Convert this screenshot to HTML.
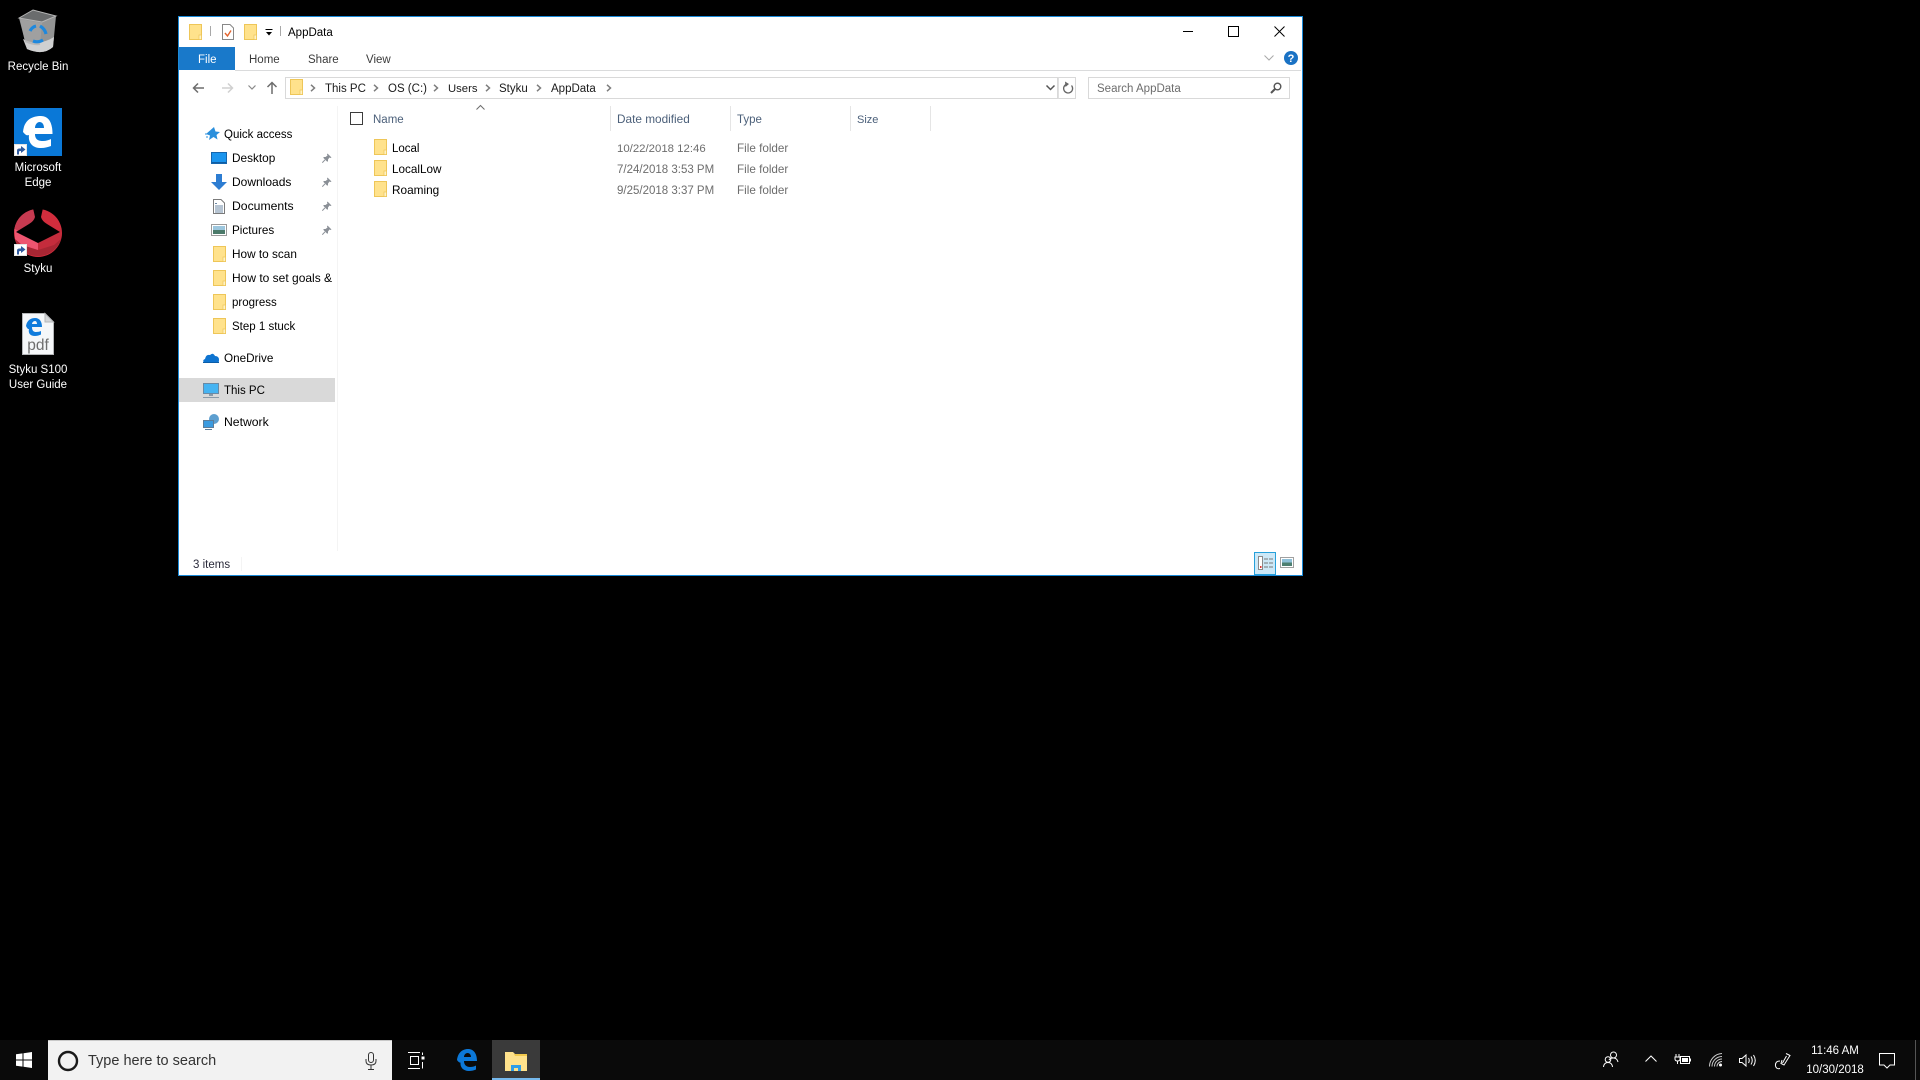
<!DOCTYPE html>
<html><head><meta charset="utf-8"><title>AppData</title>
<style>
html,body{margin:0;padding:0;width:1920px;height:1080px;background:#000;overflow:hidden}
body{position:relative;font-family:"Liberation Sans",sans-serif;font-size:11.5px}
.t{position:absolute;line-height:16px;white-space:nowrap;color:#000;margin-top:1px}
.d{color:#fff;text-align:center;width:76px;left:0}
.h{color:#4c607a}.g{color:#6d6d6d}
.n{font-size:12px}
.b{position:absolute}
svg{position:absolute;overflow:visible}
</style></head><body>
<svg width="0" height="0" style="position:absolute"><defs>
<symbol id="fo" viewBox="0 0 13 16"><rect x=".5" y=".5" width="12" height="15" fill="#ffe28c" stroke="#eec658"/><rect x="10" y="11" width="2.5" height="4.5" fill="#fff2c4" stroke="#eec658" stroke-width=".7"/></symbol>
<symbol id="pin" viewBox="0 0 10 10"><path d="M5.5 0.5L9.500 4.500L8.500 5L7.500 4.500L6 6.500L6 8.500L5 8.500L1.500 5L1.500 4L3.500 4L5.500 2.500L5 1.500Z" fill="#8a8f96"/><path d="M3 6.800L.3 9.700" stroke="#8a8f96"/></symbol>
<symbol id="ch" viewBox="0 0 6 8"><path d="M1 .8L4.500 4L1 7.200" fill="none" stroke="#7c7c7c" stroke-width="1.500"/></symbol>
<symbol id="sc" viewBox="0 0 13 12"><rect width="13" height="12" fill="#e4e4e4"/><rect x="1" y="1" width="11" height="10" fill="#fff"/><path d="M3 10.500V6.500Q3 4.500 5.500 4.500H7V2L11.500 5.500L7 9V7H6Q5 7 5 8V10.500Z" fill="#2f5a9e"/></symbol>
</defs></svg>

<!-- desktop icons -->
<svg style="left:18px;top:9px" width="40" height="44" viewBox="0 0 40 44">
<path d="M1 9L15 1L38 7L35 38Q25 47 9 40Z" fill="#949595"/>
<path d="M1 9L15 1L38 7L24 13Z" fill="#6a6c6d" stroke="#b5b5b5"/>
<path d="M5 30Q20 38 36 28L35 38Q25 47 9 40Z" fill="#cfd0d1"/>
<path d="M2 10L7 33Q15 37 22 36L24 14Z" fill="#a8a8a8" opacity=".6"/>
<g fill="none" stroke="#1e88dd" stroke-width="3.200"><path d="M12 22Q14 18 18 17"/><path d="M22 17Q27 20 28 25"/><path d="M25 31Q20 34 15 32"/></g>
</svg>
<div class="t d" style="top:58px">Recycle Bin</div>

<div class="b" style="left:14px;top:108px;width:48px;height:48px;background:#0a78d7"></div>
<svg style="left:14px;top:108px" width="48" height="48" viewBox="0 0 48 48"><path fill-rule="evenodd" fill="#fff" d="M9 24C10 12 18 8 27 8C35 8 38.500 15 38.500 26H21C21 32 25 33 29 33C32 33 35 32 37 31V38C34 39 31 40 27 40C18 40 14 34 15 27C12 28 11 26 9 24ZM21 20H30C30 16 28 14 25.500 14C23 14 21 17 21 20Z"/></svg>
<svg style="left:14px;top:144px" width="13" height="12"><use href="#sc"/></svg>
<div class="t d" style="top:159px">Microsoft</div><div class="t d" style="top:174px">Edge</div>

<svg style="left:14px;top:209px" width="48" height="48" viewBox="0 0 48 48">
<circle cx="24" cy="24" r="24" fill="#d22d3d"/>
<path d="M0 24A24 24 0 0 1 19 .5L24 10V26L8 20Z" fill="#c63a50"/>
<path d="M1 30L13 30L24 36L35 30L47 30A24 24 0 0 1 1 30Z" fill="#a82633"/>
<path d="M.5 20L8 24L24 34L24 41L8 36L1 30Z" fill="#ee5570"/>
<path d="M47.500 20L40 24L24 34L24 41L40 36L47 30Z" fill="#c42c3c"/>
<path d="M19 -1H29L27 8Q28 12 33 15L46 23L24 34L2 23L15 15Q20 12 21 8Z" fill="#000"/>
</svg>
<svg style="left:14px;top:244px" width="13" height="12"><use href="#sc"/></svg>
<div class="t d" style="top:260px">Styku</div>

<svg style="left:22px;top:313px" width="32" height="42" viewBox="0 0 32 42"><path d="M.5.500H23L31.500 9V41.500H.5Z" fill="#f5f7f9" stroke="#b4b6b8"/><path d="M23 .5V9H31.500Z" fill="#d4d6d8" stroke="#b4b6b8"/>
<path fill-rule="evenodd" fill="#0f7bdc" d="M4 13C5 7 9 5 13 5C18 5 20 9 20 14H10C10 18 12 19 14 19C16 19 18 18.500 19 18V21.500C17 22.500 15 23 13 23C8 23 6 20 7 16C6 16.500 5 15 4 13ZM10 11H15C15 9 14 8 13 8C11.500 8 10 9.500 10 11Z"/>
<text x="16" y="37" text-anchor="middle" font-family="Liberation Sans" font-size="15.500" fill="#6e6e6e">pdf</text></svg>
<div class="t d" style="top:361px">Styku S100</div><div class="t d" style="top:376px">User Guide</div>

<!-- window -->
<div class="b" style="left:178px;top:16px;width:1123px;height:558px;background:#fff;border:1px solid #1a8ad8"></div>

<!-- title bar -->
<svg style="left:189px;top:24px" width="13" height="16"><use href="#fo"/></svg>
<div class="b" style="left:210px;top:26px;width:1px;height:10px;background:#a8a8a8"></div>
<svg style="left:222px;top:24px" width="12" height="16" viewBox="0 0 12 16"><path d="M.5.500H8L11.500 4V15.500H.5Z" fill="#fff" stroke="#888"/><path d="M3 9L5.500 12L9 6.500" fill="none" stroke="#e2632d" stroke-width="1.400"/></svg>
<svg style="left:244px;top:24px" width="13" height="16"><use href="#fo"/></svg>
<svg style="left:265px;top:29px" width="8" height="8" viewBox="0 0 8 8"><path d="M.5.500H7.500" stroke="#000"/><path d="M1 3H7L4 6.500Z" fill="#000"/></svg>
<div class="b" style="left:280px;top:26px;width:1px;height:10px;background:#a8a8a8"></div>
<div class="t" style="left:288px;top:24px">AppData</div>
<div class="b" style="left:1183px;top:31px;width:10px;height:1px;background:#000"></div>
<div class="b" style="left:1228px;top:26px;width:9px;height:9px;border:1px solid #000"></div>
<svg style="left:1274px;top:26px" width="11" height="11"><path d="M.5.500L10.500 10.500M10.500.500L.5 10.500" stroke="#000" stroke-width="1"/></svg>

<!-- ribbon -->
<div class="b" style="left:179px;top:47px;width:56px;height:23px;background:#1979ca"></div>
<div class="t" style="left:198px;top:51px;color:#fff">File</div>
<div class="t" style="left:249px;top:51px;color:#3b3b3b">Home</div>
<div class="t" style="left:308px;top:51px;color:#3b3b3b">Share</div>
<div class="t" style="left:366px;top:51px;color:#3b3b3b">View</div>
<div class="b" style="left:235px;top:70px;width:1066px;height:1px;background:#dadbdc"></div>
<svg style="left:1264px;top:55px" width="10" height="6"><path d="M.5.500L5 5L9.500.5" fill="none" stroke="#a9a9a9"/></svg>
<svg style="left:1284px;top:51px" width="14" height="14"><circle cx="7" cy="7" r="7" fill="#1a72c4"/><text x="7" y="11" text-anchor="middle" font-family="Liberation Sans" font-weight="bold" font-size="11" fill="#fff">?</text></svg>

<!-- nav buttons -->
<svg style="left:192px;top:82px" width="12" height="12" viewBox="0 0 12 12"><path d="M12 6H1.500M6 1.500L1.500 6L6 10.500" fill="none" stroke="#6d6d6d" stroke-width="1.500"/></svg>
<svg style="left:222px;top:82px" width="12" height="12" viewBox="0 0 12 12"><path d="M0 6H10.500M6 1.500L10.500 6L6 10.500" fill="none" stroke="#d0d0d0" stroke-width="1.500"/></svg>
<svg style="left:248px;top:85px" width="8" height="5"><path d="M.5.500L4 4L7.500.5" fill="none" stroke="#8a8a8a" stroke-width="1.200"/></svg>
<svg style="left:266px;top:81px" width="12" height="13" viewBox="0 0 12 13"><path d="M6 13V1.500M1.500 6L6 1.500L10.500 6" fill="none" stroke="#6d6d6d" stroke-width="1.500"/></svg>

<!-- address bar -->
<div class="b" style="left:285px;top:77px;width:771px;height:20px;border:1px solid #d9d9d9"></div>
<div class="b" style="left:1058px;top:77px;height:20px;border:1px solid #d9d9d9;border-left:1px solid #e0e0e0;box-sizing:content-box;width:16px"></div>
<svg style="left:290px;top:79px" width="13" height="16"><use href="#fo"/></svg>
<svg style="left:310px;top:84px" width="6" height="8"><use href="#ch"/></svg>
<div class="t" style="left:325px;top:80px;color:#1a1a1a">This PC</div>
<svg style="left:373px;top:84px" width="6" height="8"><use href="#ch"/></svg>
<div class="t" style="left:388px;top:80px;color:#1a1a1a">OS (C:)</div>
<svg style="left:433px;top:84px" width="6" height="8"><use href="#ch"/></svg>
<div class="t" style="left:448px;top:80px;color:#1a1a1a;font-size:11.300px">Users</div>
<svg style="left:485px;top:84px" width="6" height="8"><use href="#ch"/></svg>
<div class="t" style="left:499px;top:80px;color:#1a1a1a">Styku</div>
<svg style="left:536px;top:84px" width="6" height="8"><use href="#ch"/></svg>
<div class="t" style="left:551px;top:80px;color:#1a1a1a">AppData</div>
<svg style="left:606px;top:84px" width="6" height="8"><use href="#ch"/></svg>
<svg style="left:1046px;top:85px" width="9" height="6"><path d="M.5.500L4.500 4.500L8.500.5" fill="none" stroke="#555" stroke-width="1.500"/></svg>
<svg style="left:1062px;top:81px" width="12" height="14" viewBox="0 0 12 14"><path d="M9.500 4.500A4.500 4.500 0 1 1 4 3.500" fill="none" stroke="#666" stroke-width="1.300"/><path d="M3 .5L7 3L3.500 6Z" fill="#666"/></svg>

<!-- search -->
<div class="b" style="left:1088px;top:77px;width:200px;height:20px;border:1px solid #d9d9d9"></div>
<div class="t g" style="left:1097px;top:80px">Search AppData</div>
<svg style="left:1270px;top:82px" width="12" height="12" viewBox="0 0 12 12"><circle cx="7.500" cy="4.500" r="3.300" fill="none" stroke="#555" stroke-width="1.400"/><path d="M5 7L1 11" stroke="#555" stroke-width="2"/></svg>

<!-- nav pane -->
<div class="b" style="left:337px;top:106px;width:1px;height:445px;background:#f4f4f4"></div>
<svg style="left:205px;top:126px" width="15" height="15" viewBox="0 0 15 15"><path d="M9 1L10.500 5.500L15 6L11.500 9L12.500 13.500L8.500 11L4 14L5 9.500L1 8" fill="#2a8fdc"/><path d="M0 8H4M1 11H3" stroke="#2a8fdc"/></svg>
<div class="t" style="left:224px;top:126px">Quick access</div>

<svg style="left:211px;top:152px" width="16" height="12" viewBox="0 0 16 12"><rect x=".5" y=".5" width="15" height="11" fill="#1b95ee" stroke="#1666ad"/><path d="M1 10.500H15" stroke="#0f5da3"/></svg>
<div class="t" style="left:232px;top:149px;font-size:11.800px">Desktop</div>
<svg style="left:322px;top:153px" width="10" height="10"><use href="#pin"/></svg>

<svg style="left:211px;top:174px" width="16" height="16" viewBox="0 0 16 16"><path d="M5 0H11V8H16L8 16L0 8H5Z" fill="#2d7dd2"/></svg>
<div class="t n" style="left:232px;top:173px">Downloads</div>
<svg style="left:322px;top:177px" width="10" height="10"><use href="#pin"/></svg>

<svg style="left:213px;top:199px" width="12" height="15" viewBox="0 0 12 15"><path d="M.5.500H8L11.500 4V14.500H.5Z" fill="#fff" stroke="#7a7a7a"/><path d="M2 4.500H4M2 7H10M2 9H10M2 11H10M2 13H10" stroke="#6d89a6"/></svg>
<div class="t n" style="left:232px;top:197px;font-size:12.200px">Documents</div>
<svg style="left:322px;top:201px" width="10" height="10"><use href="#pin"/></svg>

<svg style="left:211px;top:224px" width="16" height="12" viewBox="0 0 16 12"><rect x=".5" y=".5" width="15" height="11" fill="#fff" stroke="#9a9a9a"/><rect x="2" y="2" width="12" height="4" fill="#9cc6dd"/><rect x="2" y="6" width="12" height="4" fill="#4b7a6a"/></svg>
<div class="t" style="left:232px;top:222px;font-size:11.700px">Pictures</div>
<svg style="left:322px;top:225px" width="10" height="10"><use href="#pin"/></svg>

<svg style="left:213px;top:246px" width="13" height="16"><use href="#fo"/></svg>
<div class="t" style="left:232px;top:245px;font-size:11.800px">How to scan</div>
<svg style="left:213px;top:270px" width="13" height="16"><use href="#fo"/></svg>
<div class="t n" style="left:232px;top:269px">How to set goals &amp;</div>
<svg style="left:213px;top:294px" width="13" height="16"><use href="#fo"/></svg>
<div class="t" style="left:232px;top:294px">progress</div>
<svg style="left:213px;top:318px" width="13" height="16"><use href="#fo"/></svg>
<div class="t" style="left:232px;top:318px">Step 1 stuck</div>

<svg style="left:203px;top:353px" width="16" height="10" viewBox="0 0 16 10"><path d="M1 10Q-1 7 2 6Q3 1 7 2Q10 -1 12 3Q16 3 16 7Q16 10 14 10Z" fill="#0e74d0"/><path d="M0 9.500H16" stroke="#0a5da8"/></svg>
<div class="t" style="left:224px;top:350px;font-size:11.700px">OneDrive</div>

<div class="b" style="left:179px;top:378px;width:156px;height:24px;background:#d9d9d9"></div>
<svg style="left:203px;top:383px" width="16" height="15" viewBox="0 0 16 15"><rect x=".5" y=".5" width="15" height="10" fill="#46b4f2" stroke="#6a8aa5"/><rect x="6" y="11" width="4" height="2" fill="#8a9aa8"/><path d="M0 14.500H16" stroke="#8a9aa8"/></svg>
<div class="t" style="left:224px;top:382px">This PC</div>

<svg style="left:203px;top:414px" width="16" height="16" viewBox="0 0 16 16"><circle cx="11" cy="5" r="5" fill="#5d9fd0"/><rect x=".5" y="6.500" width="10" height="7" fill="#3b9be0" stroke="#5c7d9a"/><path d="M2 15.500H9" stroke="#5c7d9a"/></svg>
<div class="t n" style="left:224px;top:413px;font-size:12.200px">Network</div>

<!-- header -->
<svg style="left:476px;top:105px" width="9" height="5"><path d="M.5 4.500L4.500.5L8.500 4.500" fill="none" stroke="#6d6d6d"/></svg>
<div class="b" style="left:350px;top:112px;width:11px;height:11px;border:1px solid #3c3c3c"></div>
<div class="t h" style="left:373px;top:111px">Name</div>
<div class="b" style="left:610px;top:106px;width:1px;height:25px;background:#e5e5e5"></div>
<div class="t h" style="left:617px;top:110px;font-size:11.800px">Date modified</div>
<div class="b" style="left:730px;top:106px;width:1px;height:25px;background:#e5e5e5"></div>
<div class="t h" style="left:737px;top:111px">Type</div>
<div class="b" style="left:850px;top:106px;width:1px;height:25px;background:#e5e5e5"></div>
<div class="t h" style="left:857px;top:111px;font-size:11px">Size</div>
<div class="b" style="left:930px;top:106px;width:1px;height:25px;background:#e5e5e5"></div>

<!-- rows -->
<svg style="left:374px;top:139px" width="13" height="16"><use href="#fo"/></svg>
<div class="t" style="left:392px;top:140px">Local</div>
<div class="t g" style="left:617px;top:140px;font-size:11.400px">10/22/2018 12:46</div>
<div class="t g" style="left:737px;top:140px;font-size:11.700px">File folder</div>
<svg style="left:374px;top:160px" width="13" height="16"><use href="#fo"/></svg>
<div class="t" style="left:392px;top:161px;font-size:11.700px">LocalLow</div>
<div class="t g" style="left:617px;top:161px">7/24/2018 3:53 PM</div>
<div class="t g" style="left:737px;top:161px;font-size:11.700px">File folder</div>
<svg style="left:374px;top:181px" width="13" height="16"><use href="#fo"/></svg>
<div class="t" style="left:392px;top:181px;font-size:11.800px">Roaming</div>
<div class="t g" style="left:617px;top:182px">9/25/2018 3:37 PM</div>
<div class="t g" style="left:737px;top:182px;font-size:11.700px">File folder</div>

<!-- status -->
<div class="t" style="left:193px;top:556px;color:#2b2b3b">3 items</div>
<div class="b" style="left:241px;top:557px;width:1px;height:14px;background:#f4f4f4"></div>
<div class="b" style="left:1254px;top:552px;width:20px;height:21px;background:#cce8f7;border:1px solid #26a0da"></div>
<svg style="left:1258px;top:556px" width="16" height="14" viewBox="0 0 16 14"><rect x=".5" y=".5" width="4" height="13" fill="#fff" stroke="#8a8a8a"/><path d="M6 3H10M11 3H15M6 7H10M11 7H15M6 11H10M11 11H15" stroke="#777"/><rect x="2" y="10" width="1.500" height="2" fill="#d33"/></svg>
<svg style="left:1280px;top:557px" width="14" height="11" viewBox="0 0 14 11"><rect x=".5" y=".5" width="13" height="10" fill="#fff" stroke="#a0a0a0"/><rect x="2" y="2" width="10" height="3.500" fill="#8ec0d8"/><rect x="2" y="5.500" width="10" height="3.500" fill="#4d7f70"/></svg>

<!-- taskbar -->
<div class="b" style="left:0;top:1040px;width:1920px;height:40px;background:#0a0a0a"></div>
<svg style="left:16px;top:1052px" width="16" height="16" viewBox="0 0 16 16"><path d="M0 2.300L6.500 1.400V7.500H0ZM7.500 1.200L16 0V7.500H7.500ZM0 8.500H6.500V14.600L0 13.700ZM7.500 8.500H16V16L7.500 14.800Z" fill="#fff"/></svg>
<div class="b" style="left:48px;top:1040px;width:344px;height:40px;background:#f2f2f2"></div>
<div class="b" style="left:48px;top:1040px;width:344px;height:1px;background:#c8c8c8"></div>
<svg style="left:57px;top:1050px" width="22" height="22"><circle cx="11" cy="11" r="9" fill="none" stroke="#1a1a1a" stroke-width="2.400"/></svg>
<div class="t" style="left:88px;top:1052px;font-size:14.500px;color:#333">Type here to search</div>
<svg style="left:365px;top:1052px" width="12" height="18" viewBox="0 0 12 18"><rect x="3.500" y=".5" width="5" height="10" rx="2.500" fill="none" stroke="#333"/><path d="M1 7V9Q1 13 6 13Q11 13 11 9V7M6 13V17M3 17.500H9" fill="none" stroke="#333"/></svg>
<svg style="left:408px;top:1052px" width="17" height="17" viewBox="0 0 17 17"><path d="M0 .5H12M0 16.500H12M2.500 4.500H10.500V12.500H2.500Z" fill="none" stroke="#fff"/><path d="M14.500 .5V3M14 5H16V7H14ZM14.500 10V16.500" fill="#fff" stroke="#fff"/></svg>
<svg style="left:457px;top:1049px" width="20" height="22" viewBox="0 0 20 22"><path fill-rule="evenodd" fill="#0c78d8" d="M0 11C1 3 6 0 11 0C17 0 20 5 20 12H7C7 16 9.500 18 13 18C15.500 18 17.500 17.500 19 16.500V20.500C17 21.500 14.500 22 12 22C6 22 3 18 3.500 13.500C2.500 14 1 12.500 0 11ZM7 8H14C14 5.500 12.500 4 10.500 4C8.500 4 7 6 7 8Z"/></svg>
<div class="b" style="left:492px;top:1040px;width:48px;height:40px;background:#3a3a3a"></div>
<div class="b" style="left:492px;top:1078px;width:48px;height:2px;background:#76b9ed"></div>
<svg style="left:505px;top:1051px" width="22" height="20" viewBox="0 0 22 20"><path d="M0 1H8L10 3H22V20H0Z" fill="#ffe28c"/><path d="M0 3H9L10 5H22V3" fill="#f2c94c"/><path d="M6 20V14H16V20Z" fill="#2f9ee8"/><rect x="9" y="17" width="4" height="3" fill="#ffe28c"/></svg>

<!-- tray -->
<svg style="left:1603px;top:1051px" width="16" height="17" viewBox="0 0 16 17" fill="none" stroke="#fff"><circle cx="10.500" cy="4" r="3"/><path d="M6 9Q7 7 10.500 7Q14 7 15 11"/><circle cx="5" cy="8.500" r="2.800"/><path d="M.5 16Q1 11.500 5 11.500Q9 11.500 9.500 16"/></svg>
<svg style="left:1645px;top:1055px" width="12" height="7"><path d="M.5 6.500L6 1L11.500 6.500" fill="none" stroke="#fff"/></svg>
<svg style="left:1675px;top:1054px" width="16" height="12" viewBox="0 0 16 12"><path d="M1 0V3M4 0V3M0 3H5V5Q5 7 2.500 7Q0 7 0 5ZM2.500 7V10" fill="none" stroke="#fff"/><rect x="5.500" y="2.500" width="9" height="7" fill="none" stroke="#fff"/><rect x="7" y="4" width="6" height="4" fill="#fff"/><rect x="15" y="4.500" width="1" height="3" fill="#fff"/></svg>
<svg style="left:1709px;top:1053px" width="14" height="14" viewBox="0 0 14 14" fill="none" stroke="#ccc"><path d="M.5 13.500A13 13 0 0 1 13 .5M3 13.500A10 10 0 0 1 13 3.500M5.500 13.500A7.500 7.500 0 0 1 13 6M8 13.500A5 5 0 0 1 13 8.500"/><circle cx="11.500" cy="12" r="1.500" fill="#fff" stroke="none"/></svg>
<svg style="left:1739px;top:1054px" width="17" height="13" viewBox="0 0 17 13" fill="none" stroke="#fff"><path d="M.5 4.500H3L7 1V12L3 8.500H.5Z"/><path d="M9.500 4Q11 6.500 9.500 9M12 2.500Q14.500 6.500 12 10.500M14.500 1Q18 6.500 14.500 12"/></svg>
<svg style="left:1775px;top:1052px" width="16" height="18" viewBox="0 0 16 18" fill="none" stroke="#fff"><path d="M11 1.500L15 3.500L9 13L6 11.500L7 8"/><path d="M11.500 4L7.500 11"/><path d="M5 9Q0 9 .5 14Q1.500 17.500 5 16.500"/></svg>
<div class="t" style="left:1795px;width:80px;text-align:center;top:1042px;color:#fff">11:46 AM</div>
<div class="t" style="left:1795px;width:80px;text-align:center;top:1061px;color:#fff">10/30/2018</div>
<svg style="left:1879px;top:1053px" width="16" height="16" viewBox="0 0 16 16"><path d="M.5 .5H15.500V12H11L8 15L5 12H.5Z" fill="none" stroke="#fff"/></svg>
<div class="b" style="left:1915px;top:1040px;width:1px;height:40px;background:#555"></div>
</body></html>
